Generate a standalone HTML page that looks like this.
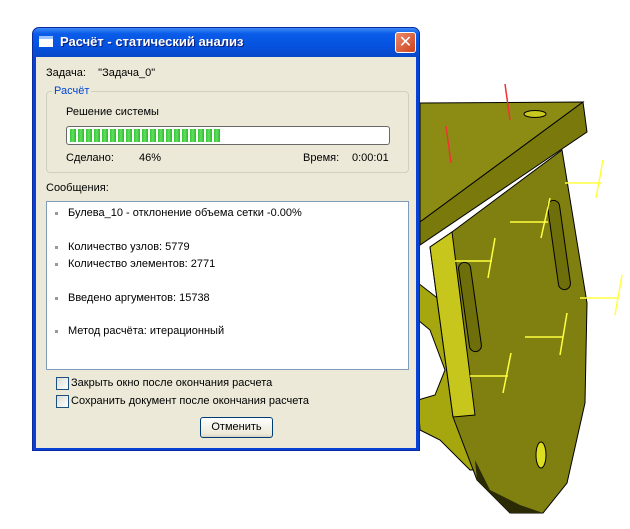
<!DOCTYPE html>
<html><head><meta charset="utf-8"><style>
*{margin:0;padding:0;box-sizing:border-box}
body{width:630px;height:529px;background:#fff;position:relative;overflow:hidden;font-family:"Liberation Sans","DejaVu Sans",sans-serif;font-size:11px;color:#000}
.abs{position:absolute}
#dlg{left:32px;top:27px;width:388px;height:424px;background:#0841d6;border-radius:7px 7px 0 0;border:1px solid #0a2c9e}
#title{left:0;top:0;width:386px;height:29px;border-radius:6px 6px 0 0;background:linear-gradient(#3d8af7,#0a5ce8 20%,#0553e0 60%,#0848c8)}
#body{left:3px;top:29px;width:380px;height:391px;background:#ece9d8}
.t{position:absolute;white-space:nowrap}
ul li{list-style:none;position:absolute;left:10px;white-space:nowrap}
ul li:before{content:"";position:absolute;left:-2px;top:5px;width:3px;height:3px;background:#999}
ul li span{position:absolute;left:11px}
.cb{position:absolute;width:13px;height:13px;border:1px solid #1c5180;background:linear-gradient(135deg,#dcdcd4,#fff)}
</style></head><body>
<svg class="abs" style="left:0;top:0" width="630" height="529">
 <polygon points="418,283 440,300 460,350 470,420 480,470 470,470 440,440 420,430 418,400 435,395 445,370 430,330 418,320" fill="#a6a60f" stroke="#000" stroke-width="1"/>
 <polygon points="562,150 587,303 585,403 567,483 543,513 510,513 477,480 453,417 430,247 452,232" fill="#808010" stroke="#000" stroke-width="1"/>
 <polygon points="477,480 510,513 543,513 520,505 490,490 475,460" fill="#2a2a05"/>
 <polygon points="430,247 452,232 475,415 453,417" fill="#c6c61c" stroke="#000" stroke-width="1"/>
 <polygon points="420,103 583,102 420,222" fill="#8c8c14" stroke="#000" stroke-width="1"/>
 <polygon points="583,102 587,132 420,245 420,222" fill="#7a7a0c" stroke="#000" stroke-width="1"/>
 <ellipse cx="535" cy="114" rx="11" ry="3.5" fill="#c8c81e" stroke="#000"/>
 <rect x="464" y="262" width="12" height="90" rx="6" transform="rotate(-8 470 307)" fill="#6e6e0a" stroke="#000"/>
 <rect x="553" y="200" width="12" height="90" rx="6" transform="rotate(-8 559 245)" fill="#6e6e0a" stroke="#000"/>
 <ellipse cx="541" cy="455" rx="5" ry="13" fill="#dede20" stroke="#000"/>
 <g stroke="#ee3333" stroke-width="1.5"><line x1="505" y1="84" x2="510" y2="120"/><line x1="446" y1="126" x2="451" y2="163"/></g>
 <g stroke="#ffff40" stroke-width="1.5" fill="none">
  <path d="M565,183H602M603,160L596,198"/><path d="M510,222H548M550,198L541,238"/>
  <path d="M455,261H492M495,238L488,278"/><path d="M580,298H618M622,275L615,315"/>
  <path d="M525,337H563M567,313L560,355"/><path d="M470,376H508M511,353L503,393"/>
 </g>
</svg>
<div id="dlg" class="abs">
 <div id="title" class="abs">
  <div class="abs" style="left:6px;top:8px;width:14px;height:11px;background:#fff;border-top:3px solid #9cc2ff"></div>
  <div class="t" style="left:27px;top:6px;color:#fff;font-weight:bold;font-size:13px;text-shadow:1px 1px #0a1e7a">Расчёт - статический анализ</div>
  <div class="abs" style="left:362px;top:4px;width:21px;height:21px;border:1px solid #fff;border-radius:3px;background:linear-gradient(135deg,#e88a6a,#d0401c);color:#fff;font-weight:bold;font-size:16px;text-align:center;line-height:19px">✕</div>
 </div>
 <div id="body" class="abs">
  <div class="t" style="left:10px;top:10px">Задача:&nbsp;&nbsp;&nbsp; "Задача_0"</div>
  <div class="abs" style="left:10px;top:34px;width:363px;height:82px;border:1px solid #d0d0bf;border-radius:4px"></div>
  <div class="t" style="left:16px;top:28px;color:#0046d5;background:#ece9d8;padding:0 2px">Расчёт</div>
  <div class="t" style="left:30px;top:49px">Решение системы</div>
  <div class="abs" style="left:30px;top:69px;width:324px;height:19px;border:1px solid #686868;border-radius:3px;background:#fff;padding:2px 3px">
   <div style="width:152px;height:13px;background:repeating-linear-gradient(90deg,#37c837 0,#5ee05e 3px,#2fb52f 6px,#fff 6px,#fff 8px)"></div>
  </div>
  <div class="t" style="left:30px;top:95px">Сделано:</div>
  <div class="t" style="left:103px;top:95px">46%</div>
  <div class="t" style="left:267px;top:95px">Время:</div>
  <div class="t" style="left:316px;top:95px">0:00:01</div>
  <div class="t" style="left:10px;top:125px">Сообщения:</div>
  <div class="abs" style="left:10px;top:144px;width:363px;height:169px;background:#fff;border:1px solid #7f9db9">
   <ul>
    <li style="top:5px"><span>Булева_10 - отклонение объема сетки -0.00%</span></li>
    <li style="top:39px"><span>Количество узлов: 5779</span></li>
    <li style="top:56px"><span>Количество элементов: 2771</span></li>
    <li style="top:90px"><span>Введено аргументов: 15738</span></li>
    <li style="top:123px"><span>Метод расчёта: итерационный</span></li>
   </ul>
  </div>
  <div class="cb" style="left:20px;top:320px"></div>
  <div class="t" style="left:35px;top:320px">Закрыть окно после окончания расчета</div>
  <div class="cb" style="left:20px;top:338px"></div>
  <div class="t" style="left:35px;top:338px">Сохранить документ после окончания расчета</div>
  <div class="abs" style="left:164px;top:360px;width:73px;height:21px;border:1px solid #003c74;border-radius:3px;background:linear-gradient(#fff,#ece9d8 85%,#d6d0c0);text-align:center;line-height:19px">Отменить</div>
 </div>
</div>
</body></html>
